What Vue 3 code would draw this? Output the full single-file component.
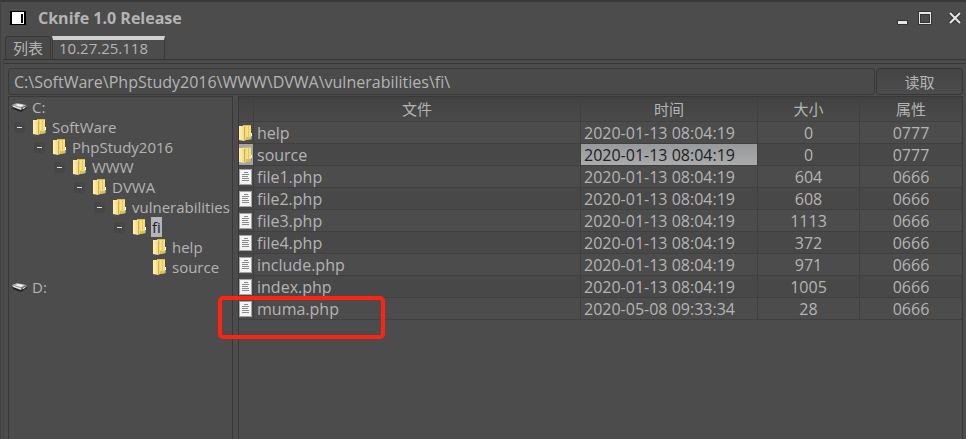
<template>
  <div class="window">
    <header class="titlebar">
      <svg class="app-icon" viewBox="0 0 16 14">
        <rect width="16" height="14" fill="#000" />
        <rect x="2" y="1" width="12" height="12" fill="#fff" />
        <rect x="11" y="3" width="2" height="9" fill="#000" />
      </svg>
      <h1>Cknife 1.0 Release</h1>
      <div class="win-buttons">
        <button type="button" aria-label="最小化">
          <svg viewBox="0 0 14 14">
            <rect x="1" y="9" width="11" height="5" rx="1" fill="#333" />
            <rect x="2" y="10" width="9" height="3" fill="#e6e6e6" />
          </svg>
        </button>
        <button type="button" aria-label="最大化">
          <svg viewBox="0 0 14 14">
            <rect width="14" height="14" rx="1" fill="#333" />
            <path d="M1 1h12v12H1z M2 3v9h10V3z" fill="#e6e6e6" fill-rule="evenodd" />
            <rect x="3" y="4" width="8" height="7" fill="#4c4c4c" />
          </svg>
        </button>
        <button type="button" class="close" aria-label="关闭">
          <svg viewBox="0 0 14 14">
            <path d="M2 2l10 10M12 2L2 12" stroke="#333" stroke-width="4" />
            <path d="M2 2l10 10M12 2L2 12" stroke="#e6e6e6" stroke-width="2" />
          </svg>
        </button>
      </div>
    </header>

    <nav class="tabs">
      <button
        v-for="tab in tabs"
        :key="tab"
        type="button"
        class="tab"
        :class="{ active: tab === activeTab }"
        @click="activeTab = tab"
      >{{ tab }}</button>
    </nav>

    <main class="page">
      <form class="path-bar" @submit.prevent>
        <input v-model="path" type="text" aria-label="路径" spellcheck="false" />
        <button type="submit">读取</button>
      </form>

      <div class="panels">
        <!-- 目录树 -->
        <ul class="tree">
          <li v-for="(node, i) in nodes" :key="i" :style="{ paddingLeft: indent(node) + 'px' }">
            <button v-if="node.open" type="button" class="toggle" aria-label="折叠"></button>
            <svg v-if="node.level === 0" class="disk" viewBox="0 0 16 12">
              <path d="M0 5l5-3 10 2v3l-6 4-8-3z" fill="#222" />
              <path d="M0 4l5-2 10 2-6 3z" fill="#a9a9a9" />
              <path d="M3 4l3-1 6 1-3 2z" fill="#f4f4f4" />
              <path d="M0 4l9 3v2L1 6z" fill="#dedede" />
              <path d="M9 7l6-3v2L9 9z" fill="#777" />
              <path d="M11 7l2-1v1l-2 1z" fill="#eee" />
            </svg>
            <svg v-else class="folder" viewBox="0 0 14 16"><use href="#folder" /></svg>
            <span class="label" :class="{ selected: node.selected }">{{ node.name }}</span>
          </li>
        </ul>

        <!-- 文件列表 -->
        <div class="files">
          <table>
            <colgroup>
              <col class="col-icon" />
              <col />
              <col class="col-time" />
              <col class="col-size" />
              <col class="col-attr" />
            </colgroup>
            <thead>
              <tr>
                <th></th>
                <th>文件</th>
                <th>时间</th>
                <th>大小</th>
                <th>属性</th>
              </tr>
            </thead>
            <tbody>
              <tr v-for="file in files" :key="file.name" :class="{ current: file.name === 'source' }">
                <td class="icon">
                  <svg v-if="file.dir" class="folder" viewBox="0 0 14 16"><use href="#folder" /></svg>
                  <svg v-else class="doc" viewBox="0 0 14 16">
                    <rect width="13" height="16" fill="#a4a4a4" />
                    <rect x="1" y="1" width="11" height="14" fill="#f4f4f4" />
                    <path
                      d="M5 3.5h4M3 5.5h7M3 7.5h6M3 9.5h7M3 11.5h7"
                      stroke="#8a8a8a"
                    />
                  </svg>
                </td>
                <td class="name">
                  {{ file.name }}
                  <span v-if="file.marked" class="mark"></span>
                </td>
                <td class="time">{{ file.time }}</td>
                <td>{{ file.size }}</td>
                <td>{{ file.attr }}</td>
              </tr>
            </tbody>
          </table>
        </div>
      </div>
    </main>

    <svg class="defs" aria-hidden="true">
      <defs>
        <linearGradient id="gold" x1="0" x2="1" y1="0" y2="0">
          <stop offset="0" stop-color="#fff3ae" />
          <stop offset="1" stop-color="#ecd277" />
        </linearGradient>
        <symbol id="folder" viewBox="0 0 14 16">
          <path d="M4 0h8v8l1 1v5l-4 1H4z" fill="#dcbb50" />
          <path d="M7 1h5v11H7z" fill="#f5df85" />
          <path d="M0 1h6l1 1v13l-2 1-5-1z" fill="url(#gold)" />
          <path d="M5 2h1v13H5z" fill="#d3ae48" />
          <path d="M9 1h1v12H9z" fill="#e4c662" />
          <path d="M12 8h1v3h-1z" fill="#fff" />
          <path d="M12 11h1v3h-1z" fill="#48a9dc" />
        </symbol>
      </defs>
    </svg>
  </div>
</template>

<script setup>
import { ref } from 'vue';

const tabs = ['列表', '10.27.25.118'];
const activeTab = ref('10.27.25.118');
const path = ref('C:\\SoftWare\\PhpStudy2016\\WWW\\DVWA\\vulnerabilities\\fi\\');

const nodes = [
  { name: 'C:', level: 0 },
  { name: 'SoftWare', level: 1, open: true },
  { name: 'PhpStudy2016', level: 2, open: true },
  { name: 'WWW', level: 3, open: true },
  { name: 'DVWA', level: 4, open: true },
  { name: 'vulnerabilities', level: 5, open: true },
  { name: 'fi', level: 6, open: true, selected: true },
  { name: 'help', level: 7 },
  { name: 'source', level: 7 },
  { name: 'D:', level: 0 }
];

// 没有折叠按钮的节点要补上按钮的宽度
const indent = (node) => {
  if (node.level === 0) return 3;
  return 5 + (node.level - 1) * 20 + (node.open ? 0 : 19);
};

const files = [
  { name: 'help', dir: true, time: '2020-01-13 08:04:19', size: 0, attr: '0777' },
  { name: 'source', dir: true, time: '2020-01-13 08:04:19', size: 0, attr: '0777' },
  { name: 'file1.php', time: '2020-01-13 08:04:19', size: 604, attr: '0666' },
  { name: 'file2.php', time: '2020-01-13 08:04:19', size: 608, attr: '0666' },
  { name: 'file3.php', time: '2020-01-13 08:04:19', size: 1113, attr: '0666' },
  { name: 'file4.php', time: '2020-01-13 08:04:19', size: 372, attr: '0666' },
  { name: 'include.php', time: '2020-01-13 08:04:19', size: 971, attr: '0666' },
  { name: 'index.php', time: '2020-01-13 08:04:19', size: 1005, attr: '0666' },
  { name: 'muma.php', time: '2020-05-08 09:33:34', size: 28, attr: '0666', marked: true }
];
</script>

<style>
body {
  background: #4c4c4c;
}
</style>

<style scoped>
.window {
  box-sizing: border-box;
  min-height: 100vh;
  display: flex;
  flex-direction: column;
  border-top: 2px solid #383838;
  border-left: 1px solid #414141;
  background: #4c4c4c;
  color: #b4b4b4;
  font-family: 'Open Sans', 'Noto Sans CJK SC', sans-serif;
  font-size: 16px;
  font-variant-ligatures: none;
  line-height: 20px;
}

button,
input {
  font: inherit;
  color: inherit;
}

svg {
  display: block;
  flex: none;
}

.titlebar {
  display: flex;
  align-items: center;
  height: 32px;
  padding: 0 4px 0 9px;
}

.app-icon {
  width: 16px;
  height: 14px;
}

.titlebar h1 {
  flex: 1;
  margin: 0 0 0 12px;
  font-size: 16px;
  font-weight: bold;
}

.win-buttons {
  display: flex;
  gap: 8px;
}

.win-buttons button {
  padding: 0;
  border: none;
  background: none;
}

.win-buttons .close {
  margin-left: 8px;
}

.win-buttons svg {
  width: 14px;
  height: 14px;
}

.tabs {
  display: flex;
  gap: 1px;
  height: 23px;
  padding: 2px 4px 0;
}

.tab {
  padding: 0 7px 1px;
  border: 1px solid #3a3a3a;
  border-bottom: none;
  border-radius: 3px 3px 0 0;
  background: #484848;
  font-size: 15px;
}

.tab.active {
  padding: 0 16px 3px 6px;
  border-top: 4px solid #d0d0d0;
  border-radius: 0;
  background: #4c4c4c;
  line-height: 16px;
}

.page {
  flex: 1;
  display: flex;
  flex-direction: column;
  margin-left: 2px;
  padding: 4px 3px 0 4px;
  border-top: 1px solid #333;
  border-left: 1px solid #434343;
  box-shadow: inset 0 3px #4c4c4c, inset 0 4px #383838;
}

.path-bar {
  display: flex;
  gap: 1px;
  padding: 4px 0 1px;
}

.path-bar input {
  box-sizing: border-box;
  flex: 1;
  min-width: 0;
  height: 27px;
  padding: 0 5px;
  border: 1px solid #393939;
  border-radius: 3px;
  background: #4a4a4a;
  outline: none;
}

.path-bar button {
  width: 87px;
  height: 27px;
  padding: 0;
  border: 1px solid #373737;
  border-radius: 3px;
  background: linear-gradient(#444, #4c4c4c);
  font-size: 15px;
}

.panels {
  flex: 1;
  display: flex;
  gap: 5px;
}

.tree {
  box-sizing: border-box;
  width: 225px;
  flex: none;
  margin: 0;
  padding: 0;
  border: 1px solid #383838;
  border-bottom: none;
  font-size: 15px;
  list-style: none;
}

.tree li {
  display: flex;
  align-items: center;
  height: 20px;
  white-space: nowrap;
}

.toggle {
  width: 11px;
  height: 11px;
  margin-right: 8px;
  padding: 3px;
  border: none;
  border-radius: 2px;
  background: #464646;
  flex: none;
}

.toggle::before {
  content: '';
  display: block;
  height: 1px;
  background: #dcdcdc;
}

.folder,
.doc {
  width: 14px;
  height: 16px;
}

.folder + .label {
  margin-left: 4px;
}

.disk {
  width: 16px;
  height: 12px;
  margin-right: 3px;
}

.label {
  padding: 0 1px;
}

.label.selected {
  background: #b4b5b9;
  color: #222;
}

.files {
  flex: 1;
  min-width: 0;
  border: 1px solid #383838;
  border-bottom: none;
}

table {
  width: 100%;
  table-layout: fixed;
  border-spacing: 0;
}

.col-icon {
  width: 15px;
}

.col-time {
  width: 177px;
}

.col-size {
  width: 102px;
}

.col-attr {
  width: 102px;
}

th,
td {
  box-sizing: border-box;
  padding: 0;
  border-right: 1px solid #404040;
  border-bottom: 1px solid #404040;
  text-align: center;
  white-space: nowrap;
}

th:last-child,
td:last-child {
  border-right: none;
}

th {
  height: 25px;
  background: linear-gradient(#424242, #4a4a4a);
  font-size: 15px;
  font-weight: normal;
}

td {
  height: 22px;
  line-height: 20px;
}

tbody tr:nth-child(even) {
  background: #484848;
}

td.name {
  position: relative;
  padding-left: 3px;
  text-align: left;
}

td.time {
  padding-left: 3px;
  text-align: left;
}

.current .icon {
  background: #a5a5a5;
}

.current .time {
  background: linear-gradient(#98999b, #aaabad);
  color: #222;
}

/* 红框标出可疑文件 */
.mark {
  position: absolute;
  top: -2px;
  left: -36px;
  box-sizing: border-box;
  width: 167px;
  height: 43px;
  border: 4px solid #ff2314;
  border-radius: 5px;
}

.defs {
  position: absolute;
  width: 0;
  height: 0;
}
</style>
